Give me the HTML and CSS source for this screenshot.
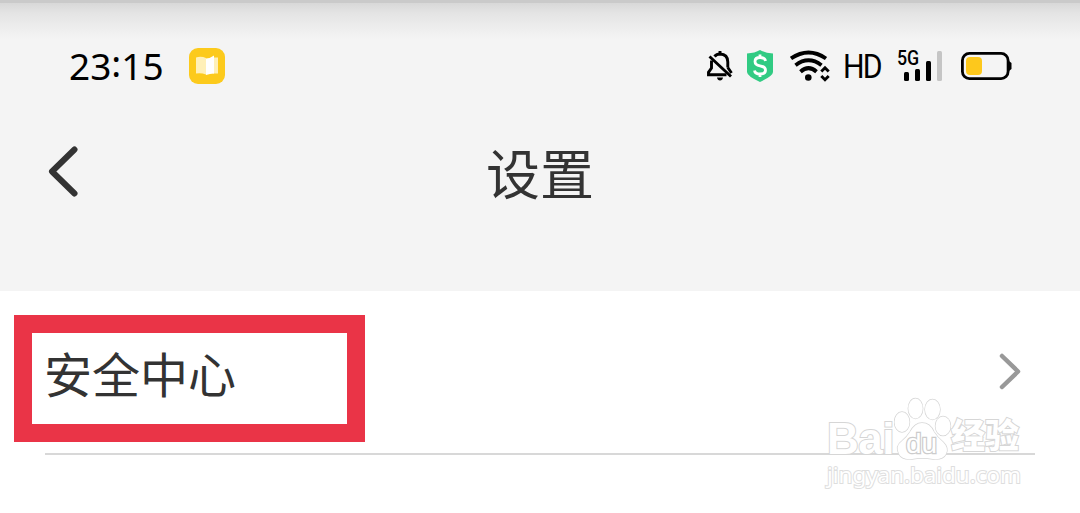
FILE: index.html
```html
<!DOCTYPE html>
<html lang="zh-CN">
<head>
  <meta charset="UTF-8" />
  <title>设置</title>
  <meta name="viewport" content="width=device-width, initial-scale=1.0" />
  <link rel="stylesheet" href="styles.css">
</head>
<body>

<header>
  <div class="status-bar">
    <span class="time">23<span class="colon">:</span>15</span>
    <svg class="app-icon" width="36" height="36" viewBox="0 0 36 36">
      <rect width="36" height="36" rx="9" fill="#fcca1c"/>
      <path d="M7 9.500 Q12 8 17 10 V26.500 Q12 24.500 7 25.500Z" fill="#fff0b8"/>
      <path d="M24 9.500 H29 V25.500 H24Z" fill="#fff0b8"/>
      <path d="M17 10.500 Q21 10.500 25 7.500 V25.500 Q21 25.500 17 27Z" fill="#fff"/>
    </svg>

    <div class="status-icons">
      <svg class="bell" width="28" height="32" viewBox="0 0 28 32" fill="none" stroke="#000" stroke-width="2.900">
        <path d="M8.500 6.500 Q10.500 4 14 4 Q21.800 4.300 21.800 12 V17.500 M5.500 10.500 V18 L2.500 22.300 V24.700 H20.500 M21.800 17.500 L25.500 23"/>
        <path d="M14 1 V4 M3.500 6.500 L25 26.500"/>
        <path d="M11 27.500 H17 Q16.500 30.500 14 30.500 Q11.500 30.500 11 27.500Z" fill="#000" stroke="none"/>
      </svg>
      <svg class="shield" width="28" height="34" viewBox="0 0 28 34">
        <path d="M14 1 Q19 4 27 4.500 V23 Q27 27 14 33 Q1 27 1 23 V4.500 Q9 4 14 1Z" fill="#31cb83"/>
        <path d="M19.500 12 Q19 8.500 14 8.500 Q9 8.500 9 12.500 Q9 16 14 16.800 Q19.500 17.700 19.500 21.300 Q19.500 25 14 25 Q9 25 8.500 21.500 M14 5.500 V9 M14 25 V28" fill="none" stroke="#fff" stroke-width="2.800"/>
      </svg>
      <svg class="wifi" width="40" height="32" viewBox="0 0 40 32" fill="none" stroke="#000" stroke-width="3.900">
        <path d="M1 8.500 Q18.500 -3.500 36 8.500 M5.500 15.200 Q18.500 5.500 31.500 15.200 M10.500 21.700 Q18.500 14.500 26.500 21.700"/>
        <circle cx="18.300" cy="27.500" r="3.300" fill="#000" stroke="none"/>
        <path d="M31.300 21.500 L35 17.800 L38.700 21.500 M31.300 26 L35 29.700 L38.700 26" stroke-width="2.900"/>
      </svg>
      <span class="hd">HD</span>
      <div class="signal">
        <span class="network">5G</span>
        <svg width="40" height="32" viewBox="0 0 40 32">
          <rect x="1" y="22" width="5" height="9" rx="1.500"/>
          <rect x="12" y="19" width="5" height="12" rx="1.500"/>
          <rect x="23" y="11" width="5" height="20" rx="1.500"/>
          <rect x="34" y="1" width="5" height="30" rx="1.500" fill="#c5c5c5"/>
        </svg>
      </div>
      <svg class="battery" width="51" height="28" viewBox="0 0 51 28">
        <rect x="1.400" y="1.400" width="45.700" height="25.200" rx="7" fill="none" stroke="#000" stroke-width="2.800"/>
        <path d="M48 9 L50.500 11 V17 L48 19Z"/>
        <rect x="5" y="5" width="16" height="18" rx="4" fill="#fdc81c"/>
      </svg>
    </div>
  </div>

  <div class="title-bar">
    <svg class="back" width="32" height="52" viewBox="0 0 32 52">
      <path d="M27.500 4.500 L5 26.500 L27.500 48.500" fill="none" stroke="#333" stroke-width="6" stroke-linecap="round" stroke-linejoin="round"/>
    </svg>
    <h1>设置</h1>
  </div>
</header>

<main>
  <div class="item">
    <div class="highlight">安全中心</div>
    <svg class="arrow" width="24" height="40" viewBox="0 0 24 40">
      <path d="M4 5 L20 20.500 L4 36" fill="none" stroke="#999" stroke-width="4.500" stroke-linecap="round" stroke-linejoin="round"/>
    </svg>
  </div>
  <div class="divider"></div>
</main>

<div class="watermark">
  <div class="brand">
    <span class="bai">Bai</span>
    <div class="paw">
      <svg width="60" height="64" viewBox="0 0 60 64">
        <ellipse cx="8" cy="25" rx="7.500" ry="10"/>
        <ellipse cx="21.500" cy="11.500" rx="7.200" ry="10"/>
        <ellipse cx="38.500" cy="12.500" rx="7.500" ry="10"/>
        <ellipse cx="49" cy="29" rx="7.500" ry="9.500"/>
        <path d="M16 35 Q21 26 28 26 Q36 26 40 35 Q43 40 49 45 Q55 51 52 57 Q49 63 39 62 Q28 60 18 62 Q8 63 5 57 Q1 49 8 44 Q13 40 16 35Z"/>
      </svg>
      <span class="du">du</span>
    </div>
    <span class="jingyan">经验</span>
  </div>
  <div class="site">jingyan.baidu.com</div>
</div>

</body>
</html>
```
FILE: styles.css
```css
* {
  box-sizing: border-box;
}

body {
  margin: 0;
  height: 513px;
  overflow: hidden;
  font-family: "Noto Sans", "Noto Sans CJK SC", sans-serif;
  background: #fff;
  color: #333;
}

svg {
  display: block;
  flex: none;
}

header {
  height: 291px;
  padding-top: 37px;
  border-top: 3px solid #cacaca;
  background: linear-gradient(#d8d8d8 0, #e4e4e4 10px, #ebebeb 21px, #f4f4f4 36px);
}

.status-bar {
  display: flex;
  align-items: center;
  height: 52px;
  padding: 0 68px 0 69px;
  color: #000;
}

.time {
  width: 120px;
  font-family: "Noto Sans", sans-serif;
  font-size: 37px;
  line-height: 52px;
  font-weight: 400;
}

.colon {
  display: inline-block;
  transform: translateY(-3px);
}

.status-icons {
  display: flex;
  align-items: center;
  margin-left: auto;
}

.shield {
  margin-left: 12px;
}

.wifi {
  margin-left: 16px;
}

.hd {
  width: 40px;
  margin-left: 13px;
  font-family: Roboto, sans-serif;
  font-size: 34px;
  letter-spacing: -2px;
  transform: scaleX(0.89);
  transform-origin: left;
}

.signal {
  position: relative;
  margin-left: 20px;
}

.network {
  position: absolute;
  left: -6px;
  top: 0;
  font-family: Roboto, sans-serif;
  font-size: 20px;
  font-weight: 500;
  line-height: 17px;
  transform: scaleX(0.89);
  transform-origin: left;
}

.battery {
  margin-left: 18px;
}

.title-bar {
  display: grid;
  grid-template-columns: 32px 1fr 32px;
  align-items: center;
  height: 108px;
  margin-top: 26px;
  padding: 0 47px;
}

.back {
  margin-top: -2px;
}

h1 {
  margin: 4px 0 0;
  font-size: 54px;
  line-height: 80px;
  font-weight: 400;
  text-align: center;
}

.item {
  display: flex;
  justify-content: space-between;
  align-items: center;
  height: 162px;
  padding: 12px 58px 0 14px;
}

.highlight {
  width: 351px;
  height: 127px;
  padding-left: 12px;
  border: 18px solid #ea3447;
  font-size: 48px;
  line-height: 84px;
}

.arrow {
  margin-top: -14px;
}

.divider {
  height: 2px;
  margin: 0 45px;
  background: #d8d8d8;
}

/* Logo laid over the list */
.watermark {
  position: absolute;
  left: 827px;
  top: 396px;
  width: 200px;
  color: #fff;
  font-family: "Liberation Sans", "Noto Sans CJK SC", sans-serif;
  -webkit-text-stroke: 2px #d6d6d6;
  paint-order: stroke fill;
}

.brand {
  display: flex;
  align-items: flex-end;
  height: 65px;
}

.bai {
  width: 67px;
  font-size: 44px;
  font-weight: bold;
  line-height: 44px;
  letter-spacing: -0.5px;
}

.paw {
  position: relative;
  width: 57px;
}

.paw svg {
  fill: #fff;
  stroke: #d6d6d6;
  stroke-width: 1.4;
}

.du {
  position: absolute;
  left: 12px;
  top: 31px;
  font-size: 28px;
  line-height: 32px;
  -webkit-text-stroke: 2.5px #ccc;
}

.jingyan {
  font-size: 34px;
  font-weight: 900;
  line-height: 49px;
}

.site {
  font-family: "Noto Sans", sans-serif;
  font-size: 22.4px;
  line-height: 28px;
  -webkit-text-stroke: 2px #dedede;
}
```
